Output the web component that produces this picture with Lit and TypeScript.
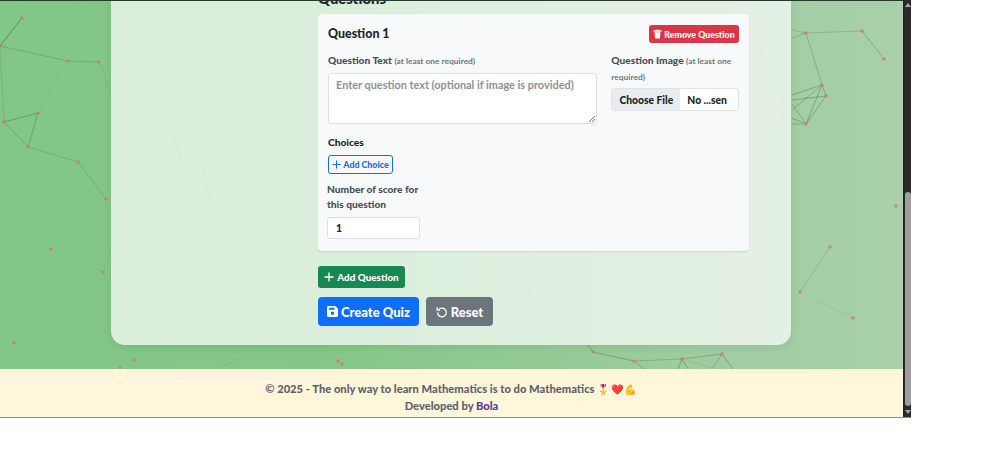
import { LitElement, html, css, svg } from "lit";
import { customElement } from "lit/decorators.js";

const P: [number, number][] = [
  [22,18],[0,46],[68,61],[99,62],[38,113],[4,122],[28,147],[78,162],[106,199],[51,249],[103,272],[14,343],[134,360],[120,368],[338,361],[342,364],
  [238,18],[222,74],[122,114],[154,108],[170,122],[202,122],[180,158],[204,174],[210,202],[267,172],[274,157],[293,108],[170,244],[228,242],[294,234],[303,282],[270,340],
  [806,33],[862,31],[884,59],[822,85],[826,96],[806,124],[896,206],[830,247],[800,292],[853,318],
  [754,21],[762,54],[782,100],[782,118],[762,132],[756,133],
  [507,287],[540,299],[574,326],[530,257],[593,352],[634,361],[682,359],[722,354],
];
const L: [number, number, number, number, number][] = [
  [22,18,0,46,.7],[0,46,68,61,.35],[68,61,99,62,.35],[99,62,110,90,.15],[0,46,4,122,.22],[38,113,4,122,.5],[38,113,28,147,.45],[4,122,28,147,.4],[28,147,78,162,.28],[78,162,106,199,.3],[51,249,103,272,.08],[38,113,58,75,.05],[220,368,240,358,.15],
  [806,33,862,31,.3],[862,31,884,59,.4],[806,33,822,85,.4],[806,33,792,38,.4],[792,30,806,33,.3],[822,85,826,96,.5],[822,85,806,124,.5],[826,96,806,124,.5],[792,95,822,85,.5],[792,100,826,96,.5],[792,110,822,85,.4],[792,118,806,124,.5],[792,104,806,124,.4],[792,124,806,124,.4],[830,247,800,292,.25],[853,318,815,300,.1],
  [593,352,634,361,.5],[634,361,682,359,.35],[682,359,722,354,.45],[588,345,593,352,.5],[634,361,644,369,.45],[682,359,678,369,.55],[682,359,688,369,.5],[722,354,712,369,.45],[722,354,733,369,.55],[682,359,712,368,.15],
];
const CARD_L: [number, number, number, number][] = [
  [122,114,154,108],[154,108,170,122],[170,122,202,122],[170,122,180,158],[180,158,204,174],[202,122,204,174],[204,174,210,202],[267,172,274,157],[754,21,762,54],[782,100,782,118],[782,118,762,132],[782,100,762,132],[507,287,540,299],[294,234,316,240],
];
const inCard = (x: number, y: number) => x > 111 && x < 791 && y < 345;

@customElement("app-root")
export class AppRoot extends LitElement {
  static styles = css`
    :host { display: block; font-family: "Lato", "Noto Sans", sans-serif; }
    * { box-sizing: border-box; }
    .window { display: flex; width: 911px; height: 418px; border-bottom: 1px solid #8f8f88; }
    .page { position: relative; flex: 1; min-width: 0; overflow: hidden; display: flex; flex-direction: column;
      background: linear-gradient(90deg, #82c785 0%, #84c686 35%, #9acb9c 70%, #a9d0aa 100%); border-top: 1px solid #27392c; }
    .net { position: absolute; left: 0; top: -1px; width: 903px; height: 418px; }
    .main { position: relative; flex: 1; min-height: 0; }
    .card { position: absolute; left: 111px; bottom: 24px; width: 680px; height: 400px; background: rgba(255,255,255,.7);
      border-radius: 14px; box-shadow: 0 2px 8px rgba(0,0,0,.08); padding: 0 42px 19px 207px;
      display: flex; flex-direction: column; justify-content: flex-end; align-items: flex-start; }
    h2 { margin: 0 0 6px; font-size: 14.8px; line-height: 19px; font-weight: 900; color: #212529; }
    .q { width: 431px; background: #f8f9fa; border-radius: 4px; box-shadow: 0 1px 2px rgba(0,0,0,.1); padding: 11px 10px 12px; margin-bottom: 15px; }
    .q-head { display: flex; justify-content: space-between; align-items: center; height: 18px; margin-bottom: 10px; }
    h3 { margin: 0; font-size: 12.4px; line-height: 18px; font-weight: 900; color: #212529; }
    .btn { display: flex; align-items: center; justify-content: center; border: 0; border-radius: 3px; color: #fff; font: inherit; font-weight: 900; padding: 0; }
    .remove { width: 90px; height: 18px; background: #dc3545; font-size: 8.8px; gap: 2px; }
    .cols { display: flex; gap: 14px; }
    .col-a { width: 270px; }
    .col-b { width: 128px; }
    label { display: block; color: #495057; font-size: 10.2px; font-weight: 900; line-height: 15px; }
    label small { color: #6c757d; font-size: 8.4px; font-weight: 700; }
    .ta { display: block; position: relative; margin-top: 4px; height: 51px; background: #fff; border: 1px solid #dee2e6; border-radius: 3px; padding: 4px 7px; color: #8b9096; font-size: 10.9px; line-height: 14px; font-weight: 700; }
    .grip { position: absolute; right: 1px; bottom: 1px; width: 6px; height: 6px; }
    .file { display: flex; margin-top: 3px; height: 23px; border: 1px solid #dee2e6; border-radius: 3px; background: #fff; font-size: 10.3px; font-weight: 900; color: #212529; overflow: hidden; }
    .file b { width: 68px; background: #e9ecef; font-weight: 900; display: flex; align-items: center; justify-content: center; }
    .file span { flex: 1; display: flex; align-items: center; padding-left: 7px; }
    .choices { margin-top: 11px; color: #212529; line-height: 15px; }
    .add-choice { margin-top: 5px; width: 65px; height: 19px; background: transparent; border: 1px solid #0d6efd; color: #0d6efd; font-size: 8.8px; gap: 2px; }
    .score { margin-top: 8px; width: 93px; margin-left: -1px; }
    .score label { line-height: 15px; }
    .num { margin-top: 5px; height: 22px; background: #fff; border: 1px solid #dee2e6; border-radius: 3px; display: flex; align-items: center; padding-left: 8px; font-size: 10.3px; font-weight: 900; color: #212529; }
    .add-q { width: 87px; height: 22px; background: #198754; font-size: 9.9px; gap: 3px; margin-bottom: 9px; }
    .actions { display: flex; gap: 7px; }
    .create { width: 101px; height: 29px; background: #0d6efd; font-size: 13px; gap: 3px; border-radius: 4px; }
    .reset { width: 67px; height: 29px; background: #6c757d; font-size: 13px; gap: 3px; border-radius: 4px; }
    footer { position: relative; height: 48px; flex: none; background: #fff6dc; color: #5f6368; text-align: center; font-size: 11.2px; font-weight: 900; line-height: 16px; padding-top: 12px; }
    footer a { color: #5b3a9b; }
    .emo { display: inline-block; width: 13.5px; text-align: center; font-size: 10px; font-weight: 400; font-family: "Noto Color Emoji", "Noto Sans", sans-serif; }
    .bar { width: 8px; background: #2b2b2b; position: relative; flex: none; border-left: 1px solid #222; }
    .thumb { position: absolute; left: 1px; right: 0; top: 192px; bottom: 11px; background: #9e9e9e; border-radius: 3px; }
    .up, .down { position: absolute; left: 1px; width: 0; height: 0; border-left: 3px solid transparent; border-right: 3px solid transparent; }
    .up { top: 3px; border-bottom: 4px solid #a8a8a8; }
    .down { bottom: 3px; border-top: 4px solid #a8a8a8; }
  `;

  render() {
    return html`<div class="window">
      <div class="page">
        <svg class="net" viewBox="0 0 903 418" aria-hidden="true">
          ${L.map(([a,b,c,d,o]) => svg`<line x1=${a} y1=${b} x2=${c} y2=${d} stroke="#2f5f35" stroke-width=".7" opacity=${o}></line>`)}
          ${CARD_L.map(([a,b,c,d]) => svg`<line x1=${a} y1=${b} x2=${c} y2=${d} stroke="#2f5f35" stroke-width=".7" opacity=".14"></line>`)}
          ${P.map(([x,y]) => svg`<circle cx=${x} cy=${y} r="1.7" fill="#e0706a" opacity=${inCard(x, y) ? ".3" : ".8"}></circle>`)}
        </svg>
        <div class="main">
          <div class="card">
            <h2>Questions</h2>
            <div class="q">
              <div class="q-head"><h3>Question 1</h3>
                <button class="btn remove">
                  <svg width="9" height="10" viewBox="0 0 16 16" fill="#fff"><path d="M2 1.500h3.500L6 .5h4l.5 1H14a1 1 0 0 1 0 2.500H2a1 1 0 0 1 0-2.500zM2.800 5h10.400l-.7 10a1 1 0 0 1-1 1h-7a1 1 0 0 1-1-1z"/></svg>
                  Remove Question</button>
              </div>
              <div class="cols">
                <div class="col-a">
                  <label>Question Text <small>(at least one required)</small></label>
                  <div class="ta">Enter question text (optional if image is provided)
                    <svg class="grip" viewBox="0 0 6 6"><path d="M0 6 6 0M3 6l3-3" stroke="#555" stroke-width=".8"/></svg>
                  </div>
                </div>
                <div class="col-b">
                  <label>Question Image <small>(at least one required)</small></label>
                  <div class="file"><b>Choose File</b><span>No ...sen</span></div>
                </div>
              </div>
              <label class="choices">Choices</label>
              <button class="btn add-choice">
                <svg width="9" height="9" viewBox="0 0 10 10"><path d="M5 1v8M1 5h8" stroke="currentColor" stroke-width="1.200" stroke-linecap="round"/></svg>
                Add Choice</button>
              <div class="score">
                <label>Number of score for this question</label>
                <div class="num">1</div>
              </div>
            </div>
            <button class="btn add-q">
              <svg width="10" height="10" viewBox="0 0 10 10"><path d="M5 1v8M1 5h8" stroke="#fff" stroke-width="1.300" stroke-linecap="round"/></svg>
              Add Question</button>
            <div class="actions">
              <button class="btn create">
                <svg width="11" height="11" viewBox="0 0 16 16" fill="#fff"><path fill-rule="evenodd" d="M2 0h10l4 4v10a2 2 0 0 1-2 2H2a2 2 0 0 1-2-2V2a2 2 0 0 1 2-2zm1 2.500v3h8v-3zM8 8a2.500 2.500 0 1 0 0 5 2.500 2.500 0 0 0 0-5z"/></svg>
                Create Quiz</button>
              <button class="btn reset">
                <svg width="12" height="12" viewBox="0 0 16 16" fill="none" stroke="#fff" stroke-width="1.800"><path d="M4 4.500A5.800 5.800 0 1 1 2.200 8.500"/><path d="M1.500 1.500V5.500H5.500" stroke-linejoin="round"/></svg>
                Reset</button>
            </div>
          </div>
        </div>
        <footer>
          <div>© 2025 - The only way to learn Mathematics is to do Mathematics <span class="emo">🎖️</span><span class="emo">❤️</span><span class="emo">💪</span></div>
          <div>Developed by <a>Bola</a></div>
        </footer>
      </div>
      <div class="bar"><div class="up"></div><div class="thumb"></div><div class="down"></div></div>
    </div>`;
  }
}
